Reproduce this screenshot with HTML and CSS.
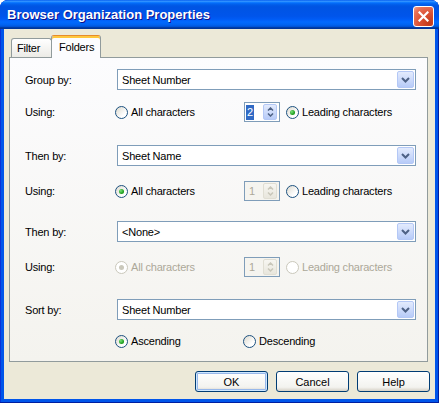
FILE: index.html
```html
<!DOCTYPE html>
<html lang="en">
<head>
    <meta charset="UTF-8">
    <title>Browser Organization Properties</title>
    <link rel="stylesheet" href="styles.css">
</head>
<body>
    <div class="window">
        <div class="titlebar">
            <span class="title">Browser Organization Properties</span>
            <button class="close" title="Close">
                <svg width="11" height="11" viewBox="0 0 11 11"><path d="M1.5 1.5L9.5 9.5M9.5 1.5L1.5 9.5" stroke="#fff" stroke-width="2.2" stroke-linecap="square"/></svg>
            </button>
        </div>

        <div class="client">
            <div class="tabs">
                <div class="tab filter-tab">Filter</div>
                <div class="tab active">Folders</div>
            </div>

            <div class="panel">
                <!-- first grouping level -->
                <div class="group first">
                    <div class="field">
                        <span>Group by:</span>
                        <div class="combo">
                            <span>Sheet Number</span>
                            <span class="combo-btn"><svg width="9" height="6" viewBox="0 0 9 6"><path d="M1 1l3.5 3.5L8 1" fill="none" stroke="#4D6185" stroke-width="2"/></svg></span>
                        </div>
                    </div>
                    <div class="field using">
                        <span>Using:</span>
                        <div class="choices">
                            <label class="option"><span class="radio"></span>All characters</label>
                            <div class="spin">
                                <span class="spin-value selected">2</span>
                                <span class="spin-btns">
                                    <svg width="7" height="4" viewBox="0 0 7 4"><path d="M1 3.5L3.5 1L6 3.5" fill="none" stroke="#4D6185" stroke-width="1.5"/></svg>
                                    <svg width="7" height="4" viewBox="0 0 7 4"><path d="M1 0.5L3.5 3L6 0.5" fill="none" stroke="#4D6185" stroke-width="1.5"/></svg>
                                </span>
                            </div>
                            <label class="option"><span class="radio on"></span>Leading characters</label>
                        </div>
                    </div>
                </div>

                <!-- second grouping level -->
                <div class="group">
                    <div class="field">
                        <span>Then by:</span>
                        <div class="combo">
                            <span>Sheet Name</span>
                            <span class="combo-btn"><svg width="9" height="6" viewBox="0 0 9 6"><path d="M1 1l3.5 3.5L8 1" fill="none" stroke="#4D6185" stroke-width="2"/></svg></span>
                        </div>
                    </div>
                    <div class="field using">
                        <span>Using:</span>
                        <div class="choices">
                            <label class="option"><span class="radio on"></span>All characters</label>
                            <div class="spin disabled">
                                <span class="spin-value">1</span>
                                <span class="spin-btns">
                                    <svg width="7" height="4" viewBox="0 0 7 4"><path d="M1 3.5L3.5 1L6 3.5" fill="none" stroke="#C9C7BA" stroke-width="1.5"/></svg>
                                    <svg width="7" height="4" viewBox="0 0 7 4"><path d="M1 0.5L3.5 3L6 0.5" fill="none" stroke="#C9C7BA" stroke-width="1.5"/></svg>
                                </span>
                            </div>
                            <label class="option"><span class="radio"></span>Leading characters</label>
                        </div>
                    </div>
                </div>

                <!-- third grouping level, not set -->
                <div class="group third">
                    <div class="field">
                        <span>Then by:</span>
                        <div class="combo">
                            <span>&lt;None&gt;</span>
                            <span class="combo-btn"><svg width="9" height="6" viewBox="0 0 9 6"><path d="M1 1l3.5 3.5L8 1" fill="none" stroke="#4D6185" stroke-width="2"/></svg></span>
                        </div>
                    </div>
                    <div class="field using">
                        <span>Using:</span>
                        <div class="choices off">
                            <label class="option"><span class="radio on"></span>All characters</label>
                            <div class="spin disabled">
                                <span class="spin-value">1</span>
                                <span class="spin-btns">
                                    <svg width="7" height="4" viewBox="0 0 7 4"><path d="M1 3.5L3.5 1L6 3.5" fill="none" stroke="#C9C7BA" stroke-width="1.5"/></svg>
                                    <svg width="7" height="4" viewBox="0 0 7 4"><path d="M1 0.5L3.5 3L6 0.5" fill="none" stroke="#C9C7BA" stroke-width="1.5"/></svg>
                                </span>
                            </div>
                            <label class="option"><span class="radio"></span>Leading characters</label>
                        </div>
                    </div>
                </div>

                <!-- sheet order inside each folder -->
                <div class="group sort-group">
                    <div class="field">
                        <span>Sort by:</span>
                        <div class="combo">
                            <span>Sheet Number</span>
                            <span class="combo-btn"><svg width="9" height="6" viewBox="0 0 9 6"><path d="M1 1l3.5 3.5L8 1" fill="none" stroke="#4D6185" stroke-width="2"/></svg></span>
                        </div>
                    </div>
                    <div class="field using">
                        <span></span>
                        <div class="choices sort">
                            <label class="option"><span class="radio on"></span>Ascending</label>
                            <label class="option"><span class="radio"></span>Descending</label>
                        </div>
                    </div>
                </div>
            </div>

            <div class="actions">
                <button class="btn default">OK</button>
                <button class="btn">Cancel</button>
                <button class="btn">Help</button>
            </div>
        </div>
    </div>
</body>
</html>
```

FILE: styles.css
```css
* {
    box-sizing: border-box;
}
body {
    margin: 0;
    background: #fff;
    font-family: Tahoma, "Liberation Sans", Arial, sans-serif;
    font-size: 11px;
    letter-spacing: -0.2px;
    color: #000;
}
.window {
    width: 439px;
    height: 403px;
    display: flex;
    flex-direction: column;
    border-radius: 8px 8px 0 0;
    overflow: hidden;
    background: #0055EA;
    box-shadow: inset -1px -1px #001EA0, inset 1px 1px #0831D9;
}
.titlebar {
    height: 29px;
    flex: none;
    display: flex;
    align-items: center;
    justify-content: space-between;
    padding: 0 5px 0 7px;
    background: linear-gradient(180deg, #0058ee 0%, #3593ff 4%, #288eff 6%, #127dff 8%, #036ffc 10%, #0262ee 14%, #0057e5 20%, #0054e3 24%, #0055eb 56%, #005bf5 66%, #026afe 76%, #0062ef 86%, #0052d6 92%, #0040ab 94%, #003092 100%);
}
.title {
    color: #fff;
    font-family: "Liberation Sans", Arial, sans-serif;
    font-weight: bold;
    font-size: 13px;
    letter-spacing: 0;
    text-shadow: 1px 1px #0F1089;
}
.close {
    width: 21px;
    height: 21px;
    margin-top: 4px;
    padding: 0;
    border: 1px solid #fff;
    border-radius: 3px;
    background: radial-gradient(circle at 80% 85%, #C23A1A 0%, #DB5134 45%, #E8735A 80%, #F4A48E 100%);
    display: flex;
    align-items: center;
    justify-content: center;
}
.client {
    flex: 1;
    margin: 0 4px 4px;
    background: #ECE9D8;
    padding: 6px 7px 0 5px;
    display: flex;
    flex-direction: column;
}

/* tab strip */
.tabs {
    height: 23px;
    display: flex;
    align-items: flex-end;
    padding-left: 2px;
    margin-bottom: -1px;
    position: relative;
    z-index: 1;
}
.tab {
    height: 19px;
    margin-bottom: 1px;
    border: 1px solid #919B9C;
    border-bottom: none;
    border-radius: 3px 3px 0 0;
    background: linear-gradient(#fff, #ECEBE6);
    display: flex;
    align-items: center;
}
.filter-tab {
    width: 41px;
    padding-left: 5px;
}
.tab.active {
    width: 50px;
    height: 23px;
    margin: 0 0 0 -1px;
    padding: 0 0 1px 7px;
    border-top-color: #E68B2C;
    background: #FCFCFE;
    box-shadow: inset 0 2px #FFC73C;
}
.panel {
    height: 305px;
    border: 1px solid #919B9C;
    background: linear-gradient(#FCFCFE, #F4F3EE);
    padding: 11px 11px 0 15px;
}

/* vertical rhythm of the four groups */
.group + .group {
    margin-top: 22px;
}
.group.first + .group {
    margin-top: 23px;
}
.group.third {
    margin-top: 20px;
}
.field {
    display: grid;
    grid-template-columns: 92px 1fr;
    align-items: center;
    height: 21px;
}
.field.using {
    height: 20px;
    margin-top: 15px;
}
.group.first .field.using {
    margin-top: 12px;
}
.group.sort-group .field.using {
    margin-top: 11px;
}
.disabled,
.choices.off .option {
    color: #ACA899;
}

/* drop-down lists */
.combo {
    height: 21px;
    border: 1px solid #7F9DB9;
    background: #fff;
    display: flex;
    align-items: center;
    justify-content: space-between;
    padding: 1px 1px 1px 4px;
}
.combo-btn {
    width: 17px;
    height: 17px;
    border: 1px solid #B4C8F6;
    border-radius: 2px;
    background: linear-gradient(#E3EBFD, #B7CBF8);
    display: flex;
    align-items: center;
    justify-content: center;
}

/* radio groups */
.choices {
    display: grid;
    grid-template-columns: 123px 36px auto;
    column-gap: 6px;
    align-items: center;
    margin-left: -2px;
}
.choices.sort {
    grid-template-columns: 128px auto;
    column-gap: 0;
}
.option {
    display: flex;
    align-items: center;
    gap: 3px;
}
.radio {
    width: 13px;
    height: 13px;
    border: 1px solid #1C5180;
    border-radius: 50%;
    background: linear-gradient(135deg, #DCD9CE, #fff 70%);
    display: flex;
    align-items: center;
    justify-content: center;
}
.radio.on::after {
    content: "";
    width: 5px;
    height: 5px;
    border-radius: 50%;
    background: radial-gradient(circle at 35% 35%, #7BE07B, #21A121 60%, #108C10);
}
.choices.off .radio {
    border-color: #CAC8BB;
    background: #fff;
}
.choices.off .radio.on::after {
    background: #CAC8BB;
}

/* number spinner */
.spin {
    height: 20px;
    border: 1px solid #7F9DB9;
    background: #fff;
    display: flex;
    align-items: center;
    justify-content: space-between;
    padding: 1px 2px 1px 1px;
}
.spin-value {
    height: 15px;
    padding: 0 1px;
    line-height: 15px;
}
.spin-value.selected {
    background: #316AC5;
    color: #fff;
}
.spin.disabled {
    background: #F5F4EF;
}
.spin.disabled .spin-value {
    padding-left: 3px;
}
.spin-btns {
    width: 14px;
    height: 16px;
    border: 1px solid #B4C8F6;
    border-radius: 2px;
    background: linear-gradient(#E3EBFD, #B7CBF8);
    display: flex;
    flex-direction: column;
    align-items: center;
    justify-content: space-evenly;
}
.spin.disabled .spin-btns {
    border-color: #E0DED3;
    background: linear-gradient(#F7F6F1, #E8E6DC);
}

/* dialog buttons */
.actions {
    display: flex;
    justify-content: flex-end;
    gap: 8px;
    margin: 9px -2px 0 0;
}
.btn {
    width: 73px;
    height: 21px;
    padding: 0;
    border: 1px solid #003C74;
    border-radius: 3px;
    background: linear-gradient(#FFFFFF, #F3F3EF 80%, #D6D0C5);
    font: inherit;
    color: #000;
}
.btn.default {
    box-shadow: inset 0 0 0 1px #CEE7FF, inset 0 0 0 2px #98B8EA;
}
```
